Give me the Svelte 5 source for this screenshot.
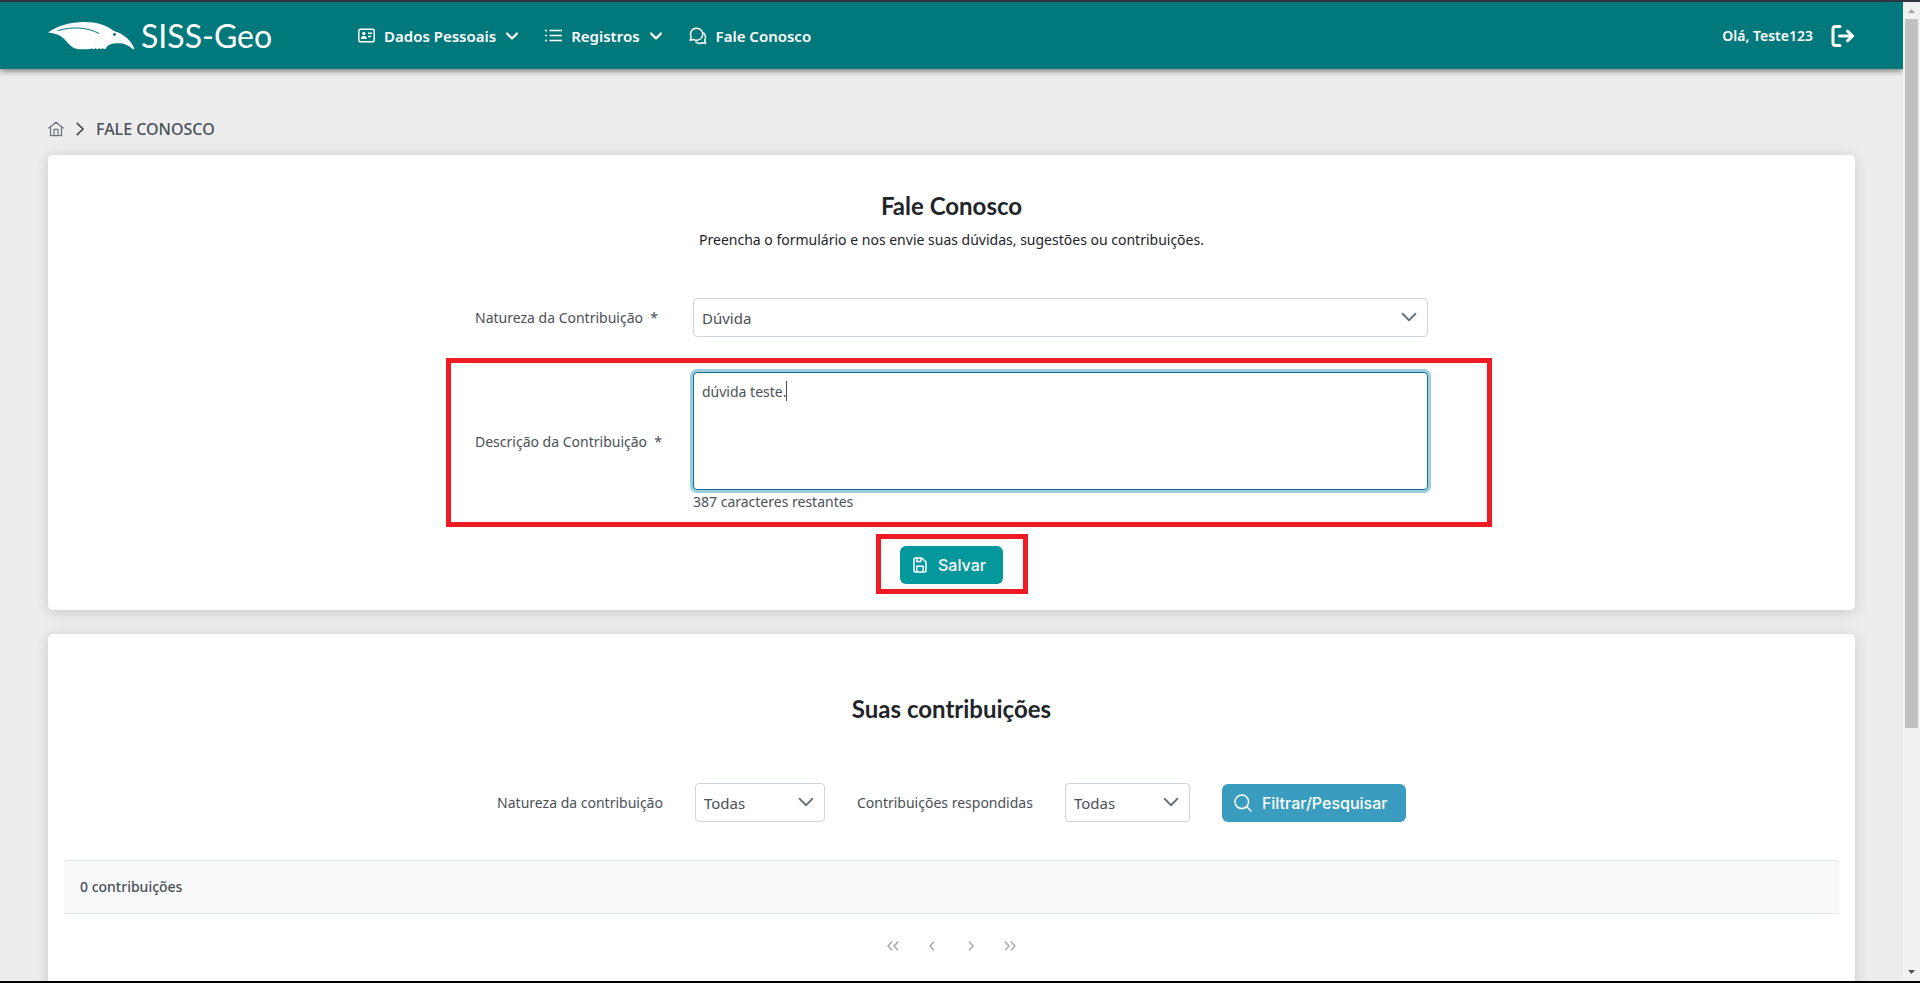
<script>
  let nature = $state('Dúvida');
  let description = $state('dúvida teste.');
  const limit = 400;
  let remaining = $derived(limit - description.length);
  let filterNature = $state('Todas');
  let filterAnswered = $state('Todas');
</script>

{#snippet chevron(size, weight)}
  <svg class="chevron" width={size} height={size} viewBox="0 0 14 14" fill="none" stroke="currentColor" stroke-width={weight} stroke-linecap="round" stroke-linejoin="round" aria-hidden="true"><path d="M2 4.500l5 5 5-5" /></svg>
{/snippet}

<div class="window">
  <div class="page">
    <header>
      <a class="logo" href="#inicio" aria-label="SISS-Geo">
        <svg width="87" height="28" viewBox="0 0 87 28" aria-hidden="true">
          <path fill="#fff" d="M0 10.500C10 3.500 22 0 36 0c13 0 22 3 30 9 10 3 17 9 20.500 18l-1.500.3C79 22 74 20.500 66 21.500c-5 .5-7 2.500-8.500 5.500h-2l-.8-1.500-.7 1.500h-2l-.8-1.500-.7 1.500h-2l-.8-1.500-.7 1.500h-2.500l-.8-1-.7 1H42c-4 .3-7 .5-11 .2C23 27 20 20 14.500 15.500 10 12 5.500 11.200 0 10.500z" />
          <path fill="none" stroke="#00787c" stroke-width="1" d="M10 8.500c14-4 29-3.500 41 3" />
          <circle cx="66.500" cy="12.500" r="1.400" fill="#00787c" />
        </svg>
        <span class="rule"></span>
        <span class="brand">SISS-Geo</span>
      </a>
      <nav>
        <a href="#dados">
          <svg width="17" height="15" viewBox="0 0 17 15" fill="none" stroke="currentColor" stroke-width="1.500" aria-hidden="true"><rect x=".8" y="1.200" width="15.400" height="12.600" rx="1.500" /><circle cx="5.800" cy="5.400" r="1.700" fill="currentColor" stroke="none" /><path d="M2.800 11c.2-2.200 1.300-3.200 3-3.200s2.800 1 3 3.200z" fill="currentColor" stroke="none" /><path d="M10 5.300h4M10 8.500h3" /></svg>
          Dados Pessoais {@render chevron(14, 2.2)}
        </a>
        <a href="#registros">
          <svg width="17" height="15" viewBox="0 0 17 15" fill="none" stroke="currentColor" stroke-width="1.600" aria-hidden="true"><path d="M4.500 2.500H17M4.500 7.500H17M4.500 12.500H17M0 2.500h2M0 7.500h2M0 12.500h2" /></svg>
          Registros {@render chevron(14, 2.2)}
        </a>
        <a href="#fale">
          <svg width="18" height="18" viewBox="0 0 18 18" fill="none" stroke="currentColor" stroke-width="1.500" stroke-linejoin="round" aria-hidden="true"><path d="M1.200 13.300l1-3C.3 5.500 3 1.200 7.500 1.200s7.500 4.300 5.600 8.500c-1.500 3-4.900 4.300-8.300 2.900z" /><path d="M14.300 5.500c2.200 2 2.700 5 1.400 7.500l1 3.500-3.300-.7c-2.600 1.200-5.200.7-7-1.200" /></svg>
          Fale Conosco
        </a>
      </nav>
      <div class="user">
        <span>Olá, Teste123</span>
        <button type="button" class="logout" aria-label="Sair">
          <svg width="24" height="24" viewBox="0 0 24 24" fill="none" stroke="currentColor" stroke-width="3" stroke-linecap="round" stroke-linejoin="round" aria-hidden="true"><path d="M9 2.500H4.500c-1.500 0-2.500 1-2.500 2.500v14c0 1.500 1 2.500 2.500 2.500H9M8.500 12h13M16.500 7.200l5.200 4.800-5.200 4.800" /></svg>
        </button>
      </div>
    </header>

    <main>
      <div class="crumbs">
        <a href="#inicio" aria-label="Início">
          <svg width="16" height="16" viewBox="0 0 16 16" fill="none" stroke="#6c757d" stroke-width="1.200" stroke-linecap="round" stroke-linejoin="round" aria-hidden="true"><path d="M.8 7L8 1.200 15.200 7M2.500 6v8.700h11V6M6 14.500V8.300h4v6.200" /></svg>
        </a>
        <svg width="8" height="16" viewBox="0 0 8 16" fill="none" stroke="#495057" stroke-width="1.700" aria-hidden="true"><path d="M.7 1.800L7 8 .7 14.200" /></svg>
        <span>FALE CONOSCO</span>
      </div>

      <section class="card contact">
        <h1>Fale Conosco</h1>
        <p>Preencha o formulário e nos envie suas dúvidas, sugestões ou contribuições.</p>
        <form onsubmit={(e) => e.preventDefault()}>
          <div class="field">
            <label for="nature">Natureza da Contribuição&nbsp; *</label>
            <div class="select">
              <select id="nature" bind:value={nature}><option>Dúvida</option><option>Sugestão</option></select>
              {@render chevron(18, 1.5)}
            </div>
          </div>
          <div class="field marked">
            <label for="description">Descrição da Contribuição&nbsp; *</label>
            <div class="area">
              <textarea id="description" maxlength={limit} bind:value={description}></textarea>
              <span class="caret"></span>
              <span class="count">{remaining} caracteres restantes</span>
            </div>
          </div>
          <div class="submit">
            <button type="submit" class="btn save">
              <svg width="16" height="16" viewBox="0 0 16 16" fill="none" stroke="currentColor" stroke-width="1.500" stroke-linejoin="round" aria-hidden="true"><path d="M2 2.200C2 1.500 2.500 1 3.200 1h6.600L14 5v8.800c0 .7-.5 1.200-1.200 1.200H3.200C2.500 15 2 14.500 2 13.800zM4.800 15V9.300h6.400V15M4.800 1v3.500h4V1" /></svg>
              Salvar
            </button>
          </div>
        </form>
      </section>

      <section class="card list">
        <h2>Suas contribuições</h2>
        <form class="filters" onsubmit={(e) => e.preventDefault()}>
          <label for="f-nature">Natureza da contribuição</label>
          <div class="select wide">
            <select id="f-nature" bind:value={filterNature}><option>Todas</option><option>Dúvida</option></select>
            {@render chevron(18, 1.5)}
          </div>
          <label for="f-answered">Contribuições respondidas</label>
          <div class="select narrow">
            <select id="f-answered" bind:value={filterAnswered}><option>Todas</option><option>Sim</option></select>
            {@render chevron(18, 1.5)}
          </div>
          <button type="submit" class="btn search">
            <svg width="18" height="18" viewBox="0 0 18 18" fill="none" stroke="currentColor" stroke-width="1.500" stroke-linecap="round" aria-hidden="true"><circle cx="7.800" cy="7.800" r="6.800" /><path d="M12.800 12.800l4.200 4.200" /></svg>
            Filtrar/Pesquisar
          </button>
        </form>
        <div class="summary">0 contribuições</div>
        <div class="pager">
          <button type="button" aria-label="Primeira página"><svg width="12" height="10" viewBox="0 0 12 10"><path d="M5 .8L1 5l4 4.200M11 .8L7 5l4 4.200" /></svg></button>
          <button type="button" aria-label="Página anterior"><svg width="12" height="10" viewBox="0 0 12 10"><path d="M8 .8L4 5l4 4.200" /></svg></button>
          <button type="button" aria-label="Próxima página"><svg width="12" height="10" viewBox="0 0 12 10"><path d="M4 .8L8 5 4 9.200" /></svg></button>
          <button type="button" aria-label="Última página"><svg width="12" height="10" viewBox="0 0 12 10"><path d="M1 .8L5 5 1 9.200M7 .8L11 5 7 9.200" /></svg></button>
        </div>
      </section>
    </main>
  </div>

  <div class="scrollbar" aria-hidden="true">
    <svg width="17" height="17" viewBox="0 0 17 17"><path d="M5 11l3.500-4 3.500 4z" fill="#a3a3a3" /></svg>
    <div class="track"><div class="thumb"></div></div>
    <svg width="17" height="17" viewBox="0 0 17 17"><path d="M5 6l3.500 4L12 6z" fill="#505050" /></svg>
  </div>
</div>

<style>
  :global(body) { background: #ededed; }
  * { box-sizing: border-box; }
  .window {
    display: flex;
    height: 100vh;
    overflow: hidden;
    border-top: 2px solid #2f3441;
    border-bottom: 2px solid #000;
    background: #ededed;
    color: #495057;
    font-family: "Noto Sans", sans-serif;
    font-size: 14px;
    line-height: 24px;
  }
  .page { flex: 1; min-width: 0; overflow: hidden; }
  a { color: inherit; text-decoration: none; }
  button, select, textarea { font: inherit; color: inherit; }
  svg { flex: none; display: block; }
  header {
    display: flex;
    align-items: center;
    height: 67px;
    padding: 0 48px;
    background: #00787c;
    box-shadow: 0 2px 6px rgba(0, 0, 0, .5);
    color: #fff;
    font-weight: 600;
  }
  .logo { display: flex; align-items: center; width: 222px; }
  .rule { width: 1px; height: 26px; margin: 0 3px; background: #5fa9ac; }
  .brand { font-family: Lato, sans-serif; font-size: 32px; font-weight: 400; line-height: 40px; white-space: nowrap; }
  nav { display: flex; gap: 26px; margin-left: 88px; font-size: 15px; }
  nav a { display: flex; align-items: center; gap: 9px; }
  .user { display: flex; align-items: center; gap: 18px; margin-left: auto; }
  .logout { padding: 0; border: 0; background: none; }
  main { padding: 48px 48px 0; }
  .crumbs { display: flex; align-items: center; gap: 12px; height: 24px; margin-bottom: 14px; font-size: 16px; font-weight: 500; }
  .card { border-radius: 5px; background: #fff; box-shadow: 0 2px 14px rgba(0, 0, 0, .16); }
  .contact { padding: 34px 16px 26px; text-align: center; }
  h1, h2 { margin: 0; color: #212529; font-family: Lato, sans-serif; font-size: 24px; font-weight: 700; line-height: 34px; text-align: center; }
  p { margin: 5px 0 0; color: #212529; line-height: 24px; }
  .contact form { max-width: 953px; margin: 46px auto 0; text-align: left; }
  .field { display: grid; grid-template-columns: 218px 1fr; align-items: center; }
  .select { position: relative; height: 39px; }
  select { width: 100%; height: 100%; padding: 0 8px; border: 1px solid #ced4da; border-radius: 4px; background: #fff; font-size: 15px; appearance: none; }
  .select .chevron { position: absolute; top: 10px; right: 10px; pointer-events: none; color: #6c757d; }
  .marked { position: relative; margin-top: 35px; }
  .marked::after { content: ""; position: absolute; inset: -14px -64px -14px -29px; border: 5px solid #ed1c24; pointer-events: none; }
  .area { position: relative; display: flex; flex-direction: column; }
  textarea { display: block; height: 118px; padding: 7px 8px; border: 1px solid #0f6f94; border-radius: 4px; outline: 0; box-shadow: 0 0 0 3px #9dccde; background: #fff; resize: none; }
  .caret { position: absolute; top: 9px; left: 93px; width: 1px; height: 20px; background: #495057; }
  .count { line-height: 23px; }
  .marked label { padding-bottom: 2px; }
  .submit { position: relative; width: 103px; margin: 33px auto 0; }
  .submit::after { content: ""; position: absolute; inset: -12px -25px -10px -24px; border: 5px solid #ed1c24; pointer-events: none; }
  .btn { display: flex; align-items: center; gap: 10px; height: 38px; padding: 0 12px; border: 0; border-radius: 6px; color: #fff; font-family: Inter, sans-serif; font-size: 16px; font-weight: 500; }
  .save { width: 103px; background: #04979c; }
  .search { width: 184px; background: #3a9dbf; }
  .list { margin-top: 24px; padding: 58px 16px 40px; }
  .filters { display: flex; align-items: center; justify-content: center; gap: 32px; margin: 57px 0 38px; }
  .wide { width: 130px; }
  .narrow { width: 125px; }
  .summary { padding: 14px 16px; border: solid #e5e9ee; border-width: 1px 0; border-radius: 3px 3px 0 0; background: #f8f9fb; font-weight: 500; line-height: 24px; }
  .pager { display: flex; justify-content: center; padding: 12px 0; }
  .pager button { display: grid; place-items: center; width: 39px; height: 40px; padding: 0; border: 0; background: none; }
  .pager path { fill: none; stroke: #9ea3a9; stroke-width: 1.3; }
  .scrollbar { display: flex; flex: none; flex-direction: column; width: 17px; background: #f1f1f1; }
  .track { flex: 1; padding: 0 2px; }
  .thumb { height: 75%; background: #c1c1c1; }
</style>
